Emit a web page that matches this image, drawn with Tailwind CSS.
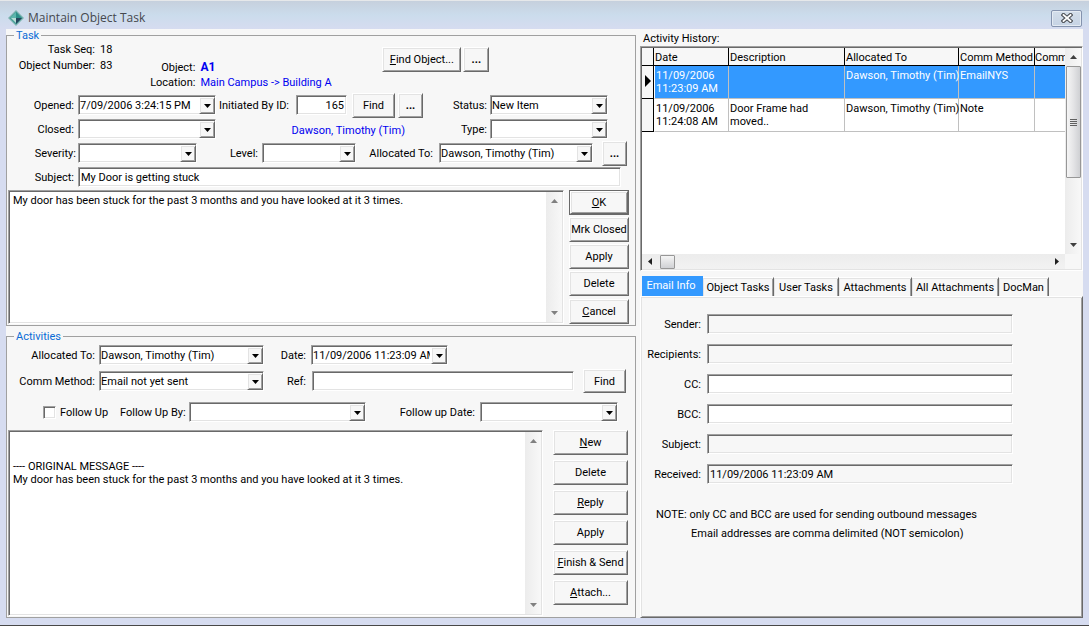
<!DOCTYPE html>
<html lang="en">
<head>
<meta charset="utf-8">
<title>Maintain Object Task</title>
<script src="https://cdn.jsdelivr.net/npm/@tailwindcss/browser@4"></script>
</head>
<body class="min-h-screen flex flex-col bg-[#d6dcf0] border-b border-[#484848] font-[Roboto,'DejaVu_Sans_Condensed',sans-serif] text-[11px] leading-[13px] text-black
[&_.sunken]:border [&_.sunken]:border-white [&_.sunken]:border-t-[#a0a0a0] [&_.sunken]:border-l-[#a0a0a0] [&_.sunken]:shadow-[inset_1px_1px_0_#696969,inset_-1px_-1px_0_#e3e3e3]
[&_.raised]:border [&_.raised]:border-[#696969] [&_.raised]:border-t-white [&_.raised]:border-l-white [&_.raised]:shadow-[inset_1px_1px_0_#e3e3e3,inset_-1px_-1px_0_#a0a0a0] [&_.raised]:bg-[#f7f7f7]
[&_.combo]:relative [&_.combo]:h-[20px] [&_.combo]:shrink-0 [&_.combo]:bg-white [&_.combo]:px-px
[&_.combo>select]:appearance-none [&_.combo>select]:block [&_.combo>select]:w-full [&_.combo>select]:h-[18px] [&_.combo>select]:pt-[2px] [&_.combo>select]:pr-[16px] [&_.combo>select]:leading-[16px] [&_.combo>select]:bg-transparent [&_.combo>select]:outline-none
[&_.drop]:absolute [&_.drop]:right-0 [&_.drop]:top-px [&_.drop]:w-[16px] [&_.drop]:h-[17px] [&_.drop]:flex [&_.drop]:items-center [&_.drop]:justify-center [&_.drop]:pointer-events-none
[&_.text]:h-[20px] [&_.text]:min-w-0 [&_.text]:px-[2px] [&_.text]:outline-none">

<svg class="hidden">
  <symbol id="down" viewBox="0 0 7 4"><path d="M0 0h7L3.5 4z" fill="currentColor"/></symbol>
  <symbol id="up" viewBox="0 0 7 4"><path d="M0 4h7L3.5 0z" fill="currentColor"/></symbol>
</svg>

<header class="h-[29px] shrink-0 flex items-center pl-[8px] pr-[7px] pt-[6px] border-t border-[#e6e8ea] bg-linear-to-b from-[#c6d0dd] via-[#cbdcec] to-[#d6dcf0]">
  <svg class="w-[16px] h-[16px]" viewBox="0 0 16 16"><path d="M8 0l8 8-8 8-8-8z" fill="#7fb3b0"/><path d="M8 1.5L14.500 8 8 14.500 1.500 8z" fill="#3f9a94"/><path d="M8 2v6H2z" fill="#5cb5ac"/><path d="M8 2l5 6H8z" fill="#2b8f88"/><path d="M8 8h6l-6 6z" fill="#24465c"/><path d="M3 8h5v5z" fill="#b7ded6"/></svg>
  <h1 class="ml-[4px] flex-1 font-['Open_Sans',sans-serif] text-[12px] leading-[16px] text-[#45484d]">Maintain Object Task</h1>
  <button aria-label="Close" class="w-[31px] h-[17px] flex items-center justify-center rounded-[2px] border border-[#8493ae] bg-linear-to-b from-[#d3deea] to-[#c6d3e4] shadow-[inset_0_0_0_1px_#e4ebf3]">
    <svg class="w-[12px] h-[10px]" viewBox="0 0 12 10"><path d="M2.500 2l7 6M9.500 2l-7 6" stroke="#4d5157" stroke-width="4" stroke-linecap="square"/><path d="M2.500 2l7 6M9.500 2l-7 6" stroke="#fff" stroke-width="1.800" stroke-linecap="square"/></svg>
  </button>
</header>

<main class="flex-1 flex gap-[4px] mx-[6px] mb-[7px] bg-[#f7f7f7]">
  <div class="flex-[630] min-w-0 flex flex-col">
    <fieldset class="flex flex-col border border-[#a0a0a0] min-w-0">
      <legend class="ml-[7px] px-[2px] text-[#0a6cd6]">Task</legend>

      <div class="flex h-[53px]">
        <dl class="grid grid-cols-[88px_auto] gap-x-[5px] auto-rows-[16px] leading-[16px]">
          <dt class="text-right">Task Seq:</dt><dd>18</dd>
          <dt class="text-right">Object Number:</dt><dd>83</dd>
        </dl>
        <dl class="grid grid-cols-[83px_178px] gap-x-[5px] auto-rows-[15px] leading-[15px] pt-[18px] whitespace-nowrap">
          <dt class="text-right">Object:</dt><dd class="text-[12px] font-bold text-[#0000f0]">A1</dd>
          <dt class="text-right">Location:</dt><dd class="text-[#0000f0]">Main Campus -&gt; Building A</dd>
        </dl>
        <button class="raised mt-[5px] ml-[4px] w-[79px] h-[25px]"><u>F</u>ind Object...</button>
        <button class="raised mt-[5px] ml-[2px] w-[26px] h-[25px] font-bold">...</button>
      </div>

      <div class="flex flex-col gap-[4px] whitespace-nowrap">
        <div class="flex items-center h-[20px]">
          <label for="opened" class="w-[67px] mr-[4px] text-right">Opened:</label>
          <div class="combo sunken w-[138px]"><select id="opened"><option>7/09/2006 3:24:15 PM</option></select><span class="drop raised"><svg class="w-[7px] h-[4px]"><use href="#down"/></svg></span></div>
          <label for="init" class="w-[77px] ml-[3px]">Initiated By ID:</label>
          <input id="init" value="165" class="text sunken w-[51px] bg-white text-right">
          <button class="raised ml-[5px] w-[43px] h-[25px] shrink-0">Find</button>
          <button class="raised ml-[3px] w-[25px] h-[25px] shrink-0 font-bold">...</button>
          <label for="status" class="w-[64px] mr-[3px] text-right">Status:</label>
          <div class="combo sunken w-[118px]"><select id="status"><option>New Item</option></select><span class="drop raised"><svg class="w-[7px] h-[4px]"><use href="#down"/></svg></span></div>
        </div>
        <div class="flex items-center h-[20px]">
          <label for="closed" class="w-[67px] mr-[4px] text-right">Closed:</label>
          <div class="combo sunken w-[138px]"><select id="closed"><option></option></select><span class="drop raised"><svg class="w-[7px] h-[4px]"><use href="#down"/></svg></span></div>
          <span class="w-[189px] pt-[3px] text-right text-[#0000f0]">Dawson, Timothy (Tim)</span>
          <label for="type" class="w-[82px] mr-[3px] text-right">Type:</label>
          <div class="combo sunken w-[118px]"><select id="type"><option></option></select><span class="drop raised"><svg class="w-[7px] h-[4px]"><use href="#down"/></svg></span></div>
        </div>
        <div class="flex items-center h-[20px]">
          <label for="severity" class="w-[69px] mr-[2px] text-right">Severity:</label>
          <div class="combo sunken w-[119px]"><select id="severity"><option></option></select><span class="drop raised"><svg class="w-[7px] h-[4px]"><use href="#down"/></svg></span></div>
          <label for="level" class="w-[61px] mr-[4px] text-right">Level:</label>
          <div class="combo sunken w-[94px]"><select id="level"><option></option></select><span class="drop raised"><svg class="w-[7px] h-[4px]"><use href="#down"/></svg></span></div>
          <label for="alloc" class="w-[77px] mr-[6px] text-right">Allocated To:</label>
          <div class="combo sunken w-[154px]"><select id="alloc"><option>Dawson, Timothy (Tim)</option></select><span class="drop raised"><svg class="w-[7px] h-[4px]"><use href="#down"/></svg></span></div>
          <button class="raised ml-[9px] w-[25px] h-[25px] shrink-0 font-bold">...</button>
        </div>
        <div class="flex items-center h-[20px]">
          <label for="subject" class="w-[67px] mr-[4px] text-right">Subject:</label>
          <input id="subject" value="My Door is getting stuck" class="text sunken flex-1 mr-[14px] bg-white">
        </div>
      </div>

      <div class="flex mt-[3px] ml-px mb-px">
        <div class="sunken flex-1 flex bg-white p-px">
          <textarea aria-label="Task details" class="flex-1 resize-none overflow-hidden outline-none pl-[3px] pt-[2px]">My door has been stuck for the past 3 months and you have looked at it 3 times.</textarea>
          <div class="w-[16px] flex flex-col items-center justify-between py-[7px] bg-linear-to-r from-[#ececec] to-[#f8f8f8] text-[#808080]"><svg class="w-[7px] h-[4px]"><use href="#up"/></svg><svg class="w-[7px] h-[4px]"><use href="#down"/></svg></div>
        </div>
        <div class="w-[60px] ml-[5px] mr-[6px] flex flex-col gap-[2px]">
          <div class="border border-[#696969]"><button class="raised block w-full h-[23px]"><u>O</u>K</button></div>
          <button class="raised h-[25px] whitespace-nowrap">Mrk Closed</button>
          <button class="raised h-[25px]">Apply</button>
          <button class="raised h-[25px]">Delete</button>
          <button class="raised h-[25px] mt-px"><u>C</u>ancel</button>
        </div>
      </div>
    </fieldset>

    <fieldset class="flex-1 flex flex-col mt-[4px] border border-[#a0a0a0] min-w-0">
      <legend class="ml-[7px] px-[2px] text-[#0a6cd6]">Activities</legend>
      <div class="flex flex-col whitespace-nowrap">
        <div class="flex items-center h-[20px] mt-[2px]">
          <label for="a-alloc" class="w-[88px] mr-[4px] text-right">Allocated To:</label>
          <div class="combo sunken w-[165px]"><select id="a-alloc"><option>Dawson, Timothy (Tim)</option></select><span class="drop raised"><svg class="w-[7px] h-[4px]"><use href="#down"/></svg></span></div>
          <label for="a-date" class="w-[42px] mr-[5px] text-right">Date:</label>
          <div class="combo sunken w-[137px]"><select id="a-date"><option>11/09/2006 11:23:09 AM</option></select><span class="drop raised"><svg class="w-[7px] h-[4px]"><use href="#down"/></svg></span></div>
        </div>
        <div class="flex items-center h-[20px] mt-[6px]">
          <label for="comm" class="w-[88px] mr-[4px] text-right">Comm Method:</label>
          <div class="combo sunken w-[165px]"><select id="comm"><option>Email not yet sent</option></select><span class="drop raised"><svg class="w-[7px] h-[4px]"><use href="#down"/></svg></span></div>
          <label for="ref" class="w-[42px] mr-[6px] text-right">Ref:</label>
          <input id="ref" class="text sunken flex-1 bg-white">
          <button class="raised ml-[9px] mr-[9px] w-[43px] h-[24px] shrink-0">Find</button>
        </div>
        <div class="flex items-center h-[20px] mt-[11px]">
          <input id="follow" type="checkbox" class="sunken appearance-none ml-[36px] w-[13px] h-[13px] bg-white">
          <label for="follow" class="ml-[4px] w-[60px]">Follow Up</label>
          <label for="by" class="w-[69px]">Follow Up By:</label>
          <div class="combo sunken w-[177px]"><select id="by"><option></option></select><span class="drop raised"><svg class="w-[7px] h-[4px]"><use href="#down"/></svg></span></div>
          <label for="fdate" class="w-[109px] mr-[5px] text-right">Follow up Date:</label>
          <div class="combo sunken w-[138px]"><select id="fdate"><option></option></select><span class="drop raised"><svg class="w-[7px] h-[4px]"><use href="#down"/></svg></span></div>
        </div>
      </div>
      <div class="flex-1 flex mt-[8px] ml-px mb-px">
        <div class="sunken flex-1 flex bg-white p-px">
          <textarea aria-label="Activity message" class="flex-1 resize-none overflow-hidden outline-none pl-[3px] pt-[2px]">


---- ORIGINAL MESSAGE ----
My door has been stuck for the past 3 months and you have looked at it 3 times.</textarea>
          <div class="w-[16px] flex flex-col items-center justify-between py-[7px] bg-linear-to-r from-[#ececec] to-[#f8f8f8] text-[#808080]"><svg class="w-[7px] h-[4px]"><use href="#up"/></svg><svg class="w-[7px] h-[4px]"><use href="#down"/></svg></div>
        </div>
        <div class="w-[75px] ml-[10px] mr-[7px] mb-[9px] flex flex-col gap-[5px] whitespace-nowrap">
          <button class="raised h-[25px]"><u>N</u>ew</button>
          <button class="raised h-[25px]">Delete</button>
          <button class="raised h-[25px]"><u>R</u>eply</button>
          <button class="raised h-[25px]">Apply</button>
          <button class="raised h-[25px]"><u>F</u>inish &amp; Send</button>
          <button class="raised h-[25px]"><u>A</u>ttach...</button>
        </div>
      </div>
    </fieldset>
  </div>

  <div class="flex-[443] min-w-0 flex flex-col">
    <h2 class="h-[17px] pt-[3px] pl-[3px]">Activity History:</h2>
    <div class="sunken p-px">
      <div class="flex h-[206px]">
        <div class="flex-1 min-w-0 overflow-hidden bg-white">
          <table class="table-fixed w-full border-separate border-spacing-0 text-left whitespace-nowrap [&_th]:font-normal [&_th]:bg-[#f7f7f7] [&_th]:border-b [&_th]:border-r [&_th]:border-black [&_th]:pl-px [&_th]:pt-px [&_td]:h-[33px] [&_td]:pl-px [&_td]:pt-[3px] [&_td]:align-top [&_td]:border-b [&_td]:border-r [&_td]:border-[#c0c0c0]">
            <thead>
              <tr class="h-[18px]"><th class="w-[12px]"></th><th class="w-[75px]">Date</th><th class="w-[116px]">Description</th><th class="w-[114px]">Allocated To</th><th class="w-[76px]">Comm Method</th><th class="border-r-0! pl-0!">Comm</th></tr>
            </thead>
            <tbody>
              <tr class="bg-[#3399ff] text-white">
                <td class="bg-[#f7f7f7] border-black! text-black"><svg class="mt-[6px] ml-[2px] w-[6px] h-[12px]" viewBox="0 0 6 12"><path d="M0 0l6 6-6 6z"/></svg></td>
                <td class="border-l border-l-white!">11/09/2006<br>11:23:09 AM</td><td></td><td>Dawson, Timothy (Tim)</td><td>EmailNYS</td><td class="border-r-0!"></td>
              </tr>
              <tr>
                <td class="bg-[#f7f7f7] border-black!"></td>
                <td class="border-l border-l-white!">11/09/2006<br>11:24:08 AM</td><td>Door Frame had<br>moved..</td><td>Dawson, Timothy (Tim)</td><td>Note</td><td class="border-r-0!"></td>
              </tr>
            </tbody>
          </table>
        </div>
        <div class="w-[16px] flex flex-col items-center pt-[7px] pb-[7px] bg-linear-to-r from-[#ececec] to-[#f8f8f8] text-[#404040]">
          <svg class="w-[7px] h-[4px]"><use href="#up"/></svg>
          <div class="mt-[7px] w-[15px] h-[112px] flex flex-col items-center justify-center gap-px rounded-[1px] border border-[#979797] bg-linear-to-r from-[#f5f5f5] via-[#e4e4e6] to-[#cfd0d3]">
            <span class="w-[7px] h-px bg-[#606060]"></span><span class="w-[7px] h-px bg-[#606060]"></span><span class="w-[7px] h-px bg-[#606060]"></span><span class="w-[7px] h-px bg-[#606060]"></span>
          </div>
          <svg class="mt-auto w-[7px] h-[4px]"><use href="#down"/></svg>
        </div>
      </div>
      <div class="flex h-[15px] text-[#202020]">
        <div class="flex-1 flex items-center pl-[6px] pr-[6px] bg-linear-to-b from-[#ececec] to-[#f2f2f2]">
          <svg class="w-[4px] h-[7px]" viewBox="0 0 4 7"><path d="M4 0v7L0 3.500z" fill="currentColor"/></svg>
          <div class="ml-[8px] w-[15px] h-[14px] rounded-[1px] border border-[#979797] bg-linear-to-b from-[#f5f5f5] to-[#d0d1d4]"></div>
          <svg class="ml-auto w-[4px] h-[7px]" viewBox="0 0 4 7"><path d="M0 0v7l4-3.500z" fill="currentColor"/></svg>
        </div>
        <div class="w-[16px] bg-[#f7f7f7]"></div>
      </div>
    </div>

    <div role="tablist" class="mt-[5px] pl-[2px] flex items-end h-[20px] whitespace-nowrap [&>button]:h-[19px] [&>button]:border-t [&>button]:border-white [&>button+button]:border-r [&>button+button]:border-r-[#696969] [&>button+button]:shadow-[inset_1px_1px_0_#e3e3e3,inset_-1px_0_0_#a0a0a0]">
      <button role="tab" aria-selected="true" class="w-[61px] h-[20px]! border-t-0! pb-[2px] pr-[3px] bg-[#3399ff] text-white">Email Info</button>
      <button role="tab" class="w-[71px]">Object Tasks</button>
      <button role="tab" class="w-[65px]">User Tasks</button>
      <button role="tab" class="w-[73px]">Attachments</button>
      <button role="tab" class="w-[87px]">All Attachments</button>
      <button role="tab" class="w-[50px]">DocMan</button>
    </div>
    <form role="tabpanel" class="raised flex-1 pt-[17px]">
      <div class="flex flex-col gap-[10px] pr-[69px] [&>div]:flex [&>div]:items-center [&_label]:w-[60px] [&_label]:mr-[6px] [&_label]:text-right">
        <div><label for="m-sender">Sender:</label><input id="m-sender" readonly class="text sunken flex-1"></div>
        <div><label for="m-to">Recipients:</label><input id="m-to" readonly class="text sunken flex-1"></div>
        <div><label for="m-cc">CC:</label><input id="m-cc" class="text sunken flex-1 bg-white"></div>
        <div><label for="m-bcc">BCC:</label><input id="m-bcc" class="text sunken flex-1 bg-white"></div>
        <div><label for="m-subject">Subject:</label><input id="m-subject" readonly class="text sunken flex-1"></div>
        <div><label for="m-received">Received:</label><input id="m-received" readonly value="11/09/2006 11:23:09 AM" class="text sunken flex-1"></div>
      </div>
      <p class="mt-[21px] pl-[15px] leading-[19px]">NOTE: only CC and BCC are used for sending outbound messages</p>
      <p class="pl-[50px] leading-[19px]">Email addresses are comma delimited (NOT semicolon)</p>
    </form>
  </div>
</main>
</body>
</html>
